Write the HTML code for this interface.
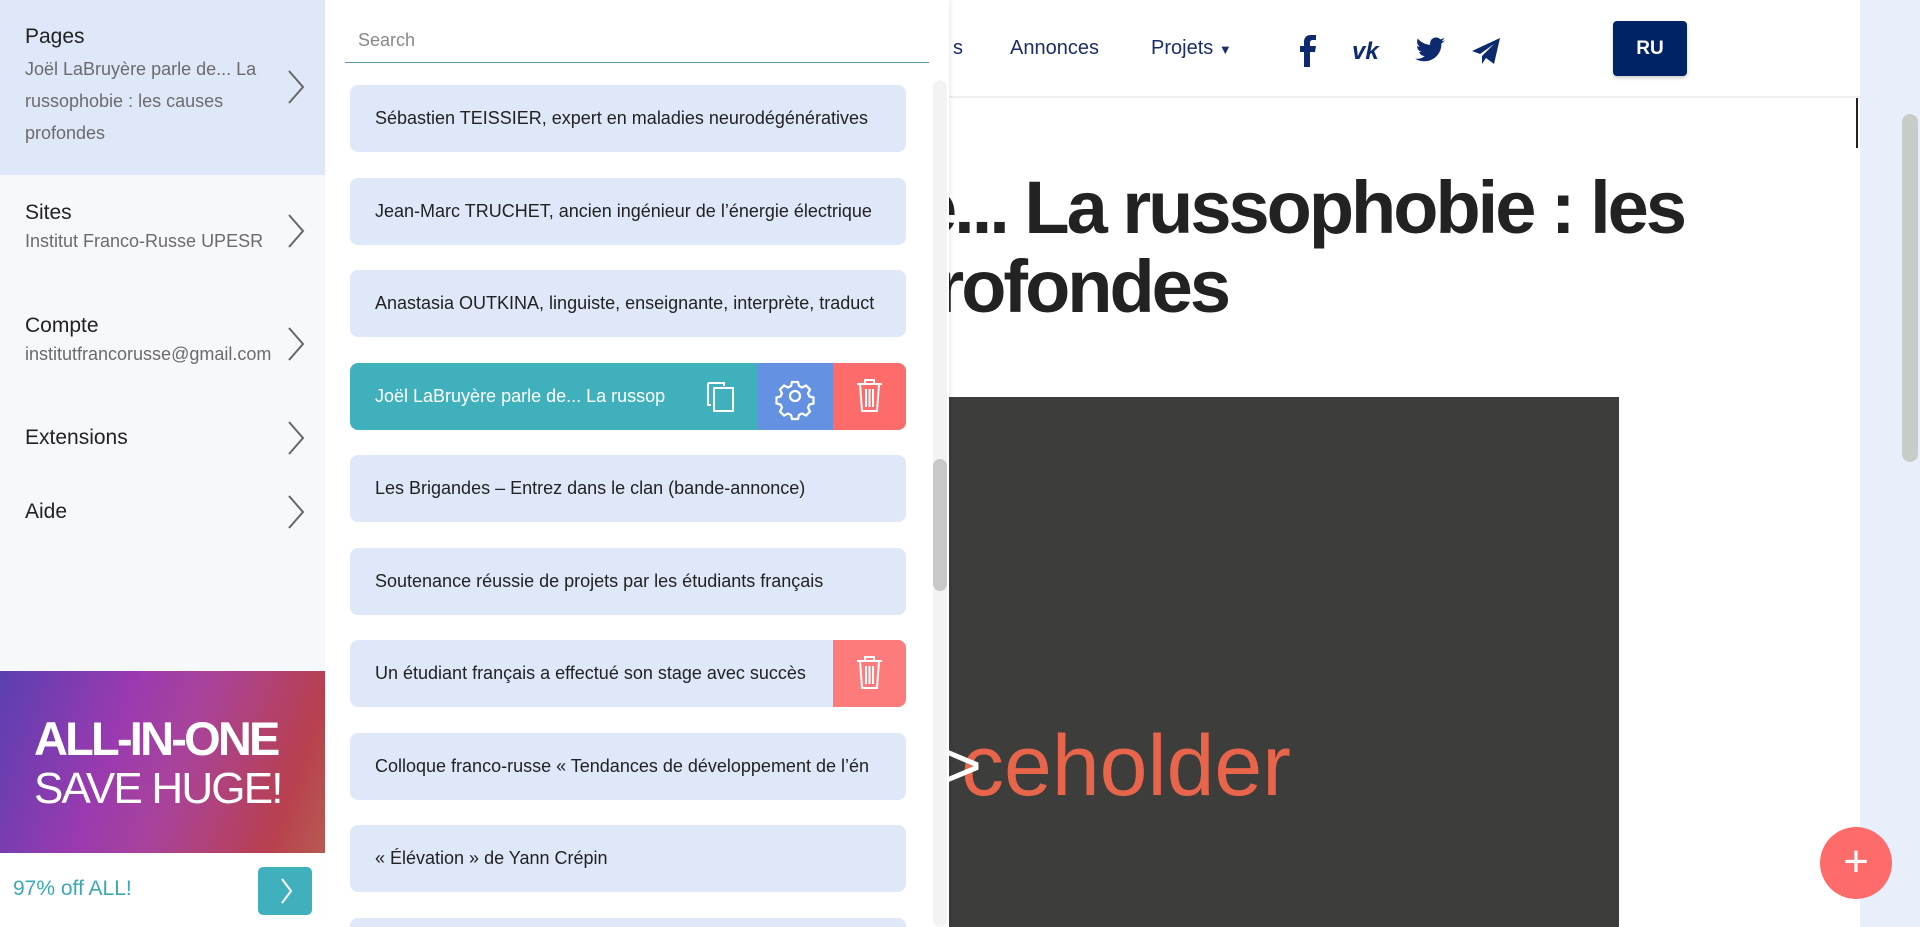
<!DOCTYPE html>
<html style="overflow:hidden;width:1920px;height:927px"><head><meta charset="utf-8"><style>
*{box-sizing:border-box;margin:0;padding:0}
body{width:1920px;height:927px;overflow:hidden;position:relative;font-family:"Liberation Sans",sans-serif;background:#fff}
.abs{position:absolute}
#side{left:0;top:0;width:325px;height:927px;background:#f7f8fb;overflow:hidden}
.mi{position:absolute;left:0;width:325px;padding-left:25px}
.mi .t{font-size:21px;color:#222}
.mi .s{font-size:18px;color:#6b6b6b;line-height:32px}
.chev{position:absolute;left:286px;width:20px;height:36px}
#panel{left:325px;top:0;width:624px;height:927px;background:#fff}
.it{position:absolute;left:350px;width:556px;height:67px;background:#dfe8f8;border-radius:8px;overflow:hidden;font-size:18px;color:#222;line-height:67px;padding-left:25px;white-space:nowrap}
</style></head><body>
<div class="abs" style="left:949px;top:0;width:911px;height:98px;background:#fff;border-bottom:2px solid #eef0f2"></div>
<div class="abs" style="left:953px;top:37px;font-size:20px;color:#1d2d6b">s</div>
<div class="abs" style="left:1010px;top:37px;font-size:20px;color:#1d2d6b">Annonces</div>
<div class="abs" style="left:1151px;top:37px;font-size:20px;color:#1d2d6b">Projets <span style="font-size:13px">▼</span></div>
<svg class="abs" style="left:1296px;top:35px" width="220" height="32" viewBox="0 0 220 32">
<path d="M14 32V17h5l1-6h-6V8c0-2 1-3 3-3h3V0h-5c-5 0-7 3-7 7v4H4v6h4v15z" fill="#0d2a6e"/>
<text x="56" y="24" font-size="24" font-weight="bold" font-style="italic" fill="#0d2a6e" font-family="Liberation Sans">vk</text>
<path d="M147 8c-1 .5-2 .8-3 .9 1-.7 2-1.7 2.3-2.9-1 .6-2.2 1-3.3 1.3a5.2 5.2 0 0 0-8.9 4.7C129.8 11.8 126 9.8 123.4 6.6c-1.4 2.4-.7 5.4 1.6 7-1 0-1.8-.3-2.4-.6 0 2.5 1.8 4.700 4.2 5.1-.8.2-1.6.3-2.4.1.7 2.1 2.6 3.6 4.9 3.6A10.5 10.5 0 0 1 121 24a14.8 14.8 0 0 0 22.8-13.1c1.3-1 2.4-2 3.2-3z" fill="#0d2a6e" transform="translate(-20,-4) scale(1.15)"/>
<path d="M176 16l28-13-6 26-8-6-4 6v-8l12-12-14 10z" fill="#0d2a6e"/>
</svg>
<div class="abs" style="left:1613px;top:21px;width:74px;height:55px;background:#002366;border-radius:4px;color:#fff;font-weight:bold;font-size:19px;line-height:55px;text-align:center;box-shadow:0 2px 3px rgba(0,0,0,.2)">RU</div>
<div class="abs" style="left:1856px;top:98px;width:2px;height:50px;background:#222"></div>
<div class="abs" style="right:236px;top:168px;font-size:74px;font-weight:bold;color:#222;line-height:80px;white-space:nowrap;letter-spacing:-3px">oël LaBruyère parle de... La russophobie : les</div>
<div class="abs" style="right:692px;top:247px;font-size:74px;font-weight:bold;color:#222;line-height:80px;white-space:nowrap;letter-spacing:-3px">causes profondes</div>
<div class="abs" style="left:949px;top:397px;width:670px;height:530px;background:#3d3d3b;overflow:hidden">
<div class="abs" style="left:12px;top:320px;font-size:86px;color:#e8654c;white-space:nowrap">ceholder</div>
<div class="abs" style="left:-8px;top:328px;font-size:70px;color:#fff">&gt;</div>
</div>
<div class="abs" style="left:1860px;top:0;width:60px;height:927px;background:#e8eefa"></div>
<div class="abs" style="left:1902px;top:114px;width:16px;height:348px;background:#c8ccc8;border-radius:8px"></div>
<div class="abs" style="left:1820px;top:827px;width:72px;height:72px;border-radius:50%;background:#fe6b6b;color:#fff;font-size:44px;line-height:70px;text-align:center;font-weight:300">+</div>
<div id="side" class="abs">
<div class="abs" style="left:0;top:0;width:325px;height:175px;background:#dfe8f8"></div>
<div class="mi" style="top:25px"><div class="t">Pages</div><div class="s" style="margin-top:4px">Joël LaBruyère parle de... La<br>russophobie : les causes<br>profondes</div></div>
<svg class="chev" style="top:69px" viewBox="0 0 20 36"><path d="M3 2l14 16L3 34" stroke="#666" stroke-width="2" fill="none"/></svg>
<div class="mi" style="top:201px"><div class="t">Sites</div><div class="s">Institut Franco-Russe UPESR</div></div>
<svg class="chev" style="top:213px" viewBox="0 0 20 36"><path d="M3 2l14 16L3 34" stroke="#666" stroke-width="2" fill="none"/></svg>
<div class="mi" style="top:314px"><div class="t">Compte</div><div class="s">institutfrancorusse@gmail.com</div></div>
<svg class="chev" style="top:326px" viewBox="0 0 20 36"><path d="M3 2l14 16L3 34" stroke="#666" stroke-width="2" fill="none"/></svg>
<div class="mi" style="top:426px"><div class="t">Extensions</div></div>
<svg class="chev" style="top:420px" viewBox="0 0 20 36"><path d="M3 2l14 16L3 34" stroke="#666" stroke-width="2" fill="none"/></svg>
<div class="mi" style="top:500px"><div class="t">Aide</div></div>
<svg class="chev" style="top:494px" viewBox="0 0 20 36"><path d="M3 2l14 16L3 34" stroke="#666" stroke-width="2" fill="none"/></svg>
<div class="abs" style="left:0;top:671px;width:325px;height:182px;background:linear-gradient(110deg,#5a3fb0 0%,#9a3ab0 35%,#a9439a 55%,#b8404f 85%,#b85a50 100%)">
<div class="abs" style="left:34px;top:40px;color:#fff;font-weight:bold;font-size:47px;letter-spacing:-2.8px">ALL-IN-ONE</div>
<div class="abs" style="left:34px;top:93px;color:#fff;font-size:44px;letter-spacing:-1.8px">SAVE HUGE!</div>
</div>
<div class="abs" style="left:0;top:853px;width:325px;height:74px;background:#fff"></div>
<div class="abs" style="left:13px;top:877px;font-size:21px;color:#3aa8b8">97% off ALL!</div>
<div class="abs" style="left:258px;top:867px;width:54px;height:48px;background:#41b0bd;border-radius:5px"><svg width="54" height="48"><path d="M24 12l9 12-9 12" stroke="#fff" stroke-width="2" fill="none"/></svg></div>
</div>
<div id="panel" class="abs" style="box-shadow:2px 0 4px rgba(0,0,0,.08);overflow:hidden">
<div class="abs" style="left:20px;top:30px;width:584px;height:33px;border-bottom:1.5px solid #5b9aa8;font-size:18px;color:#888;padding-left:13px">Search</div>
<div class="abs" style="left:608px;top:80px;width:14px;height:847px;background:#f3f3f3;border-radius:7px"></div>
<div class="abs" style="left:608px;top:459px;width:14px;height:132px;background:#c8c8c8;border-radius:7px"></div>
<div style="position:absolute;left:-325px;top:0;width:949px;height:927px;overflow:hidden">
<div class="it" style="top:85px">Sébastien TEISSIER, expert en maladies neurodégénératives</div>
<div class="it" style="top:178px">Jean-Marc TRUCHET, ancien ingénieur de l’énergie électrique</div>
<div class="it" style="top:270px">Anastasia OUTKINA, linguiste, enseignante, interprète, traduct</div>
<div class="it" style="top:363px;background:#41b0bd;color:#fff">Joël LaBruyère parle de... La russop
<svg class="abs" style="left:354px;top:16px" width="34" height="34" viewBox="0 0 34 34"><path d="M4 4h16v3M4 4v22h3" stroke="#fff" stroke-width="2" fill="none"/><rect x="10" y="9" width="19" height="23" stroke="#fff" stroke-width="2" fill="none"/></svg>
<div class="abs" style="left:407px;top:0;width:76px;height:67px;background:#6591e3"><svg width="76" height="67" viewBox="0 0 76 67"><g transform="translate(38,33)" stroke="#fff" stroke-width="2.2" fill="none"><circle r="5"/><path d="M-3 -14h6l1 4 3 1.5 4-2 4 4-2 4 1.5 3 4 1v6l-4 1-1.5 3 2 4-4 4-4-2-3 1.5-1 4h-6l-1-4-3-1.5-4 2-4-4 2-4-1.5-3-4-1v-6l4-1 1.5-3-2-4 4-4 4 2 3-1.5z"/></g></svg></div>
<div class="abs" style="left:483px;top:0;width:73px;height:67px;background:#fe6b6b"><svg width="73" height="67" viewBox="0 0 73 67"><g stroke="#fff" stroke-width="2" fill="none"><path d="M24 21h25M32 21v-4h9v4M27 21l2 27h15l2-27"/><path d="M33 26v18M36.5 26v18M40 26v18"/></g></svg></div>
</div>
<div class="it" style="top:455px">Les Brigandes – Entrez dans le clan (bande-annonce)</div>
<div class="it" style="top:548px">Soutenance réussie de projets par les étudiants français</div>
<div class="it" style="top:640px">Un étudiant français a effectué son stage avec succès
<div class="abs" style="left:483px;top:0;width:73px;height:67px;background:#fe7b7b"><svg width="73" height="67" viewBox="0 0 73 67"><g stroke="#fff" stroke-width="2" fill="none"><path d="M24 21h25M32 21v-4h9v4M27 21l2 27h15l2-27"/><path d="M33 26v18M36.5 26v18M40 26v18"/></g></svg></div>
</div>
<div class="it" style="top:733px">Colloque franco-russe « Tendances de développement de l’én</div>
<div class="it" style="top:825px">« Élévation » de Yann Crépin</div>
<div class="it" style="top:918px;height:9px;border-radius:8px 8px 0 0"></div>
</div>
</div>
</body></html>
